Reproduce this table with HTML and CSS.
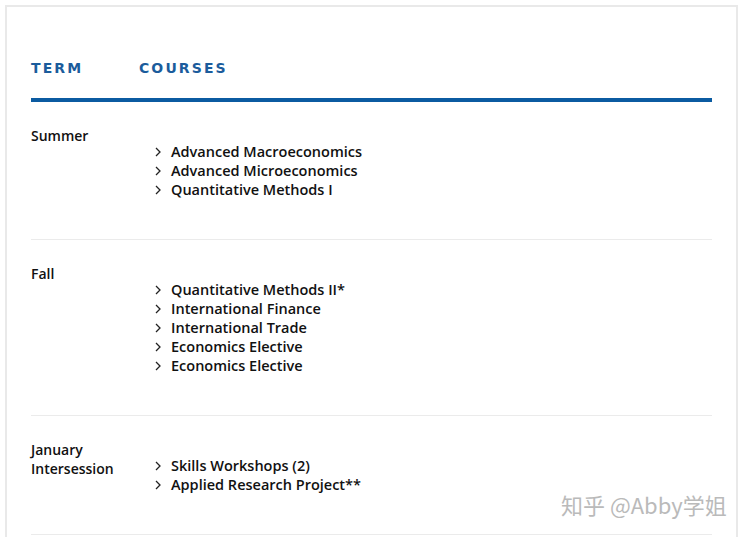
FILE: index.html
```html
<!DOCTYPE html>
<html lang="en">
<head>
<meta charset="utf-8">
<title>Curriculum</title>
<link rel="stylesheet" href="styles.css">
</head>
<body>
<div class="frame">
  <div class="head">
    <div class="h-term">TERM</div>
    <div class="h-courses">COURSES</div>
  </div>
  <div class="row">
    <div class="term">Summer</div>
    <ul class="courses">
      <li><svg class="chev" viewBox="0 0 6 10"><polyline points="1,1 5,5 1,9"/></svg>Advanced Macroeconomics</li>
      <li><svg class="chev" viewBox="0 0 6 10"><polyline points="1,1 5,5 1,9"/></svg>Advanced Microeconomics</li>
      <li><svg class="chev" viewBox="0 0 6 10"><polyline points="1,1 5,5 1,9"/></svg>Quantitative Methods I</li>
    </ul>
  </div>
  <div class="row">
    <div class="term">Fall</div>
    <ul class="courses">
      <li><svg class="chev" viewBox="0 0 6 10"><polyline points="1,1 5,5 1,9"/></svg>Quantitative Methods II*</li>
      <li><svg class="chev" viewBox="0 0 6 10"><polyline points="1,1 5,5 1,9"/></svg>International Finance</li>
      <li><svg class="chev" viewBox="0 0 6 10"><polyline points="1,1 5,5 1,9"/></svg>International Trade</li>
      <li><svg class="chev" viewBox="0 0 6 10"><polyline points="1,1 5,5 1,9"/></svg>Economics Elective</li>
      <li><svg class="chev" viewBox="0 0 6 10"><polyline points="1,1 5,5 1,9"/></svg>Economics Elective</li>
    </ul>
  </div>
  <div class="row">
    <div class="term">January<br>Intersession</div>
    <ul class="courses">
      <li><svg class="chev" viewBox="0 0 6 10"><polyline points="1,1 5,5 1,9"/></svg>Skills Workshops (2)</li>
      <li><svg class="chev" viewBox="0 0 6 10"><polyline points="1,1 5,5 1,9"/></svg>Applied Research Project**</li>
    </ul>
  </div>
</div>
<div class="watermark">知乎 @Abby学姐</div>
</body>
</html>
```
FILE: styles.css
```css
html, body {
  margin: 0;
  padding: 0;
  background: #ffffff;
  overflow: hidden;
}
body {
  font-family: "Open Sans", "DejaVu Sans", sans-serif;
  color: #111111;
}
.frame {
  margin: 5px 6px 0 5px;
  border: 2px solid #e9e9e9;
  border-bottom: none;
  padding: 0 24px;
  background: #ffffff;
  min-height: 540px;
}
.head {
  display: flex;
  padding-top: 51px;
  padding-bottom: 20px;
  border-bottom: 4px solid #0b5ba1;
}
.h-term, .h-courses {
  font-family: "DejaVu Sans", sans-serif;
  font-weight: bold;
  font-size: 14px;
  line-height: 20px;
  letter-spacing: 2.1px;
  color: #1b5c9c;
}
.h-term {
  width: 108px;
}
.row {
  display: flex;
  padding: 24px 0 40px;
  border-bottom: 1px solid #ebebeb;
}
.term {
  width: 108px;
  font-size: 14px;
  font-weight: 600;
  line-height: 19px;
}
.courses {
  list-style: none;
  margin: 16px 0 0;
  padding: 0 0 0 16px;
  font-size: 14.5px;
  font-weight: 600;
  line-height: 19px;
}
.courses li {
  display: flex;
  align-items: center;
}
.chev {
  width: 6px;
  height: 10px;
  margin-right: 10px;
  fill: none;
  stroke: #222;
  stroke-width: 1.3;
}
.watermark {
  position: absolute;
  left: 561px;
  top: 489px;
  font-family: "Noto Sans CJK SC", sans-serif;
  font-size: 22px;
  line-height: 30px;
  color: #bababa;
  text-shadow: 0 0 2px #ffffff, 1px 1px 0 #ffffff;
}
```
